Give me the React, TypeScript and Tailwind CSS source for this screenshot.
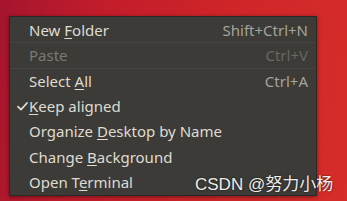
import React from "react";

type Item = {
  label: React.ReactNode;
  shortcut?: string;
  disabled?: boolean;
  checked?: boolean;
  sepBelow?: boolean;
};

const U = ({ children }: { children: React.ReactNode }) => (
  <span className="underline decoration-1 underline-offset-[2px]">{children}</span>
);

const items: Item[] = [
  { label: <>New <U>F</U>older</>, shortcut: "Shift+Ctrl+N", sepBelow: true },
  { label: <>Paste</>, shortcut: "Ctrl+V", disabled: true, sepBelow: true },
  { label: <>Select <U>A</U>ll</>, shortcut: "Ctrl+A" },
  { label: <><U>K</U>eep aligned</>, checked: true },
  { label: <>Organize <U>D</U>esktop by Name</> },
  { label: <>Change <U>B</U>ackground</> },
  { label: <>Open T<U>e</U>rminal</> },
];

export default function App() {
  return (
    <div
      className="relative w-[347px] h-[201px] overflow-hidden bg-[linear-gradient(100deg,#a5152d_0%,#c11c2b_25%,#cf2529_60%,#d62d2a_100%)] pt-[16px] pl-[9px]"
      style={{ fontFamily: '"Noto Sans", "Open Sans", sans-serif' }}
    >
      <div className="w-[308px] h-[180px] bg-[#3c3b37] border border-[#2a2926] shadow-[0_1px_4px_rgba(0,0,0,0.45)] pt-[1px] flex flex-col">
        {items.map((it, i) => (
          <div
            key={i}
            className={`relative h-[25.3px] flex items-center pl-[7px] pr-[8px] text-[15px] leading-none ${
              it.disabled ? "text-[#7b7974]" : "text-[#dfdbd2]"
            }`}
          >
            <span className="w-[12px] flex items-center justify-start">
              {it.checked && (
                <svg width="11" height="9" viewBox="0 0 11 9" fill="none">
                  <path d="M1 4.6 L4 7.6 L10 1" stroke="#dfdbd2" strokeWidth="1.8" strokeLinecap="round" strokeLinejoin="round" />
                </svg>
              )}
            </span>
            <span className="flex-1 whitespace-nowrap">{it.label}</span>
            {it.shortcut && (
              <span className={`whitespace-nowrap ${it.disabled ? "text-[#696762]" : "text-[#a5a39d]"}`}>
                {it.shortcut}
              </span>
            )}
            {it.sepBelow && (
              <div className="absolute left-0 right-0 bottom-0 h-px bg-[#45443e]" />
            )}
          </div>
        ))}
      </div>
      <div
        className="absolute left-[195px] top-[172px] text-[17px] text-[#eeeeee] whitespace-nowrap [text-shadow:0_0_2px_rgba(0,0,0,0.8)]"
        style={{ fontFamily: '"Liberation Sans", "Noto Sans CJK SC", sans-serif' }}
      >
        CSDN @努力小杨
      </div>
    </div>
  );
}
